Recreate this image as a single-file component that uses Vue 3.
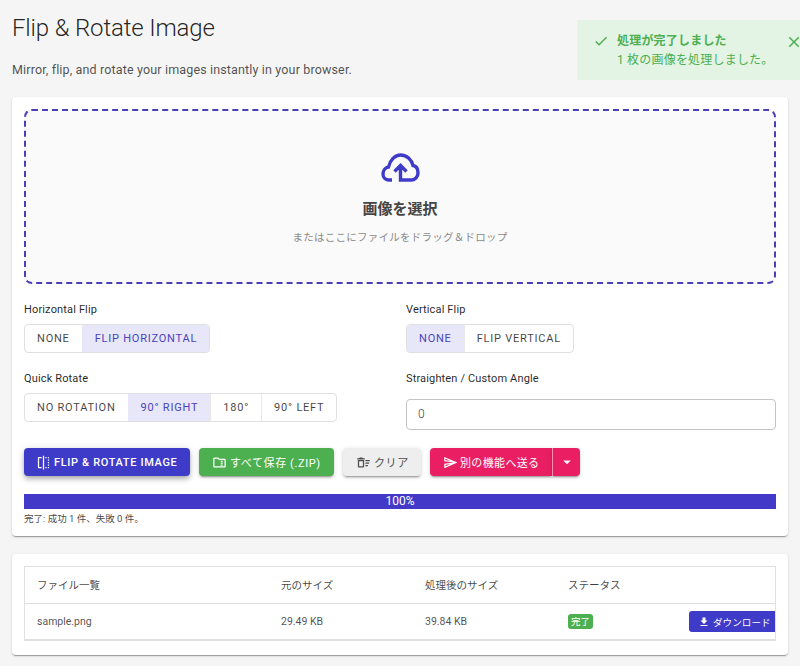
<script setup>
const flipOptions = [
  { label: 'Horizontal Flip', items: ['None', 'Flip Horizontal'], active: 1 },
  { label: 'Vertical Flip', items: ['None', 'Flip Vertical'], active: 0 },
];
const rotateItems = ['No Rotation', '90° Right', '180°', '90° Left'];
const headers = ['ファイル一覧', '元のサイズ', '処理後のサイズ', 'ステータス', ''];
</script>

<template>
  <div class="page">
    <!-- 完了トースト -->
    <div class="toast">
      <svg class="toast-check" viewBox="0 0 24 24"><path d="M9 16.17 4.83 12l-1.42 1.41L9 19 21 7l-1.41-1.41z" /></svg>
      <div class="toast-body">
        <div class="toast-title">処理が完了しました</div>
        <div>1 枚の画像を処理しました。</div>
      </div>
      <svg class="toast-close" viewBox="0 0 24 24"><path d="M19 6.41 17.59 5 12 10.59 6.41 5 5 6.41 10.59 12 5 17.59 6.41 19 12 13.41 17.59 19 19 17.59 13.41 12z" /></svg>
    </div>

    <h1 class="title">Flip &amp; Rotate Image</h1>
    <p class="subtitle">Mirror, flip, and rotate your images instantly in your browser.</p>

    <section class="card main-card">
      <div class="dropzone">
        <svg class="cloud" viewBox="0 0 40 36"><path d="M12 30H9C5.500 30 3 27.500 3 24C3 20.500 5.500 17.500 8.500 17C10 10 15 5 20.500 5C27 5 32 10 33 15.500C36.500 16 38 19.500 38 23C38 27 35 30 31 30H20.500V16M14.500 21.500L20.500 15.500L26.500 21.500" /></svg>
        <div class="drop-title">画像を選択</div>
        <div class="drop-hint">またはここにファイルをドラッグ＆ドロップ</div>
      </div>

      <div class="options">
        <div v-for="opt in flipOptions" :key="opt.label" class="option">
          <div class="option-label">{{ opt.label }}</div>
          <div class="toggle-group">
            <span
              v-for="(item, i) in opt.items"
              :key="item"
              class="toggle"
              :class="{ active: i === opt.active }"
            >{{ item }}</span>
          </div>
        </div>

        <div class="option">
          <div class="option-label">Quick Rotate</div>
          <div class="toggle-group">
            <span
              v-for="(item, i) in rotateItems"
              :key="item"
              class="toggle"
              :class="{ active: i === 1 }"
            >{{ item }}</span>
          </div>
        </div>

        <div class="option">
          <div class="option-label angle-label">Straighten / Custom Angle</div>
          <div class="angle-input">0</div>
        </div>
      </div>

      <div class="actions">
        <button class="btn btn-primary">
          <svg viewBox="0 0 24 24"><path d="M15 21h2v-2h-2v2zm4-12h2V7h-2v2zM3 5v14c0 1.1.9 2 2 2h4v-2H5V5h4V3H5c-1.1 0-2 .9-2 2zm16-2v2h2c0-1.1-.9-2-2-2zm-8 20h2V1h-2v22zm8-6h2v-2h-2v2zM15 5h2V3h-2v2zm4 8h2v-2h-2v2zm0 8c1.1 0 2-.9 2-2h-2v2z" /></svg>
          <span class="upper">Flip &amp; Rotate Image</span>
        </button>
        <button class="btn btn-green">
          <svg viewBox="0 0 24 24"><path d="M20 6h-8l-2-2H4c-1.100 0-1.990.900-1.990 2L2 18c0 1.100.900 2 2 2h16c1.100 0 2-.900 2-2V8c0-1.100-.900-2-2-2zm0 12H4V6h5.170l2 2H20v10zm-6-9h3v2h-3zm0 3h3v2h-3zm0 3h3v2h-3z" /></svg>
          <span>すべて保存 (.ZIP)</span>
        </button>
        <button class="btn btn-grey">
          <svg viewBox="0 0 24 24"><path d="M15 16h4v2h-4zm0-8h7v2h-7zm0 4h6v2h-6zM3 18c0 1.100.900 2 2 2h6c1.100 0 2-.900 2-2V8H3v10zm2-8h6v8H5v-8zm5-6H6L5 5H2v2h12V5h-3z" /></svg>
          <span>クリア</span>
        </button>
        <div class="split">
          <button class="btn btn-pink split-main">
            <svg viewBox="0 0 24 24"><path d="M4.010 6.030l7.510 3.220-7.520-1 .010-2.220m7.500 8.720L4 17.970v-2.220l7.510-1M2.010 3 2 10l15 2-15 2 .010 7L23 12 2.010 3z" /></svg>
            <span>別の機能へ送る</span>
          </button>
          <button class="btn btn-pink split-arrow">
            <svg viewBox="0 0 24 24"><path d="M7 10l5 5 5-5z" /></svg>
          </button>
        </div>
      </div>

      <div class="progress">100%</div>
      <div class="progress-note">完了: 成功 1 件、失敗 0 件。</div>
    </section>

    <section class="card table-card">
      <div class="table-wrap">
        <table class="files">
          <thead>
            <tr>
              <th v-for="h in headers" :key="h">{{ h }}</th>
            </tr>
          </thead>
          <tbody>
            <tr>
              <td>sample.png</td>
              <td>29.49 KB</td>
              <td>39.84 KB</td>
              <td><span class="chip">完了</span></td>
              <td class="cell-action">
                <button class="btn-download">
                  <svg viewBox="0 0 24 24"><path d="M19 9h-4V3H9v6H5l7 7 7-7zM5 18v2h14v-2H5z" /></svg>
                  <span>ダウンロード</span>
                </button>
              </td>
            </tr>
          </tbody>
        </table>
      </div>
    </section>
  </div>
</template>

<style>
html,
body {
  margin: 0;
  background: #f5f5f5;
}
</style>

<style scoped>
.page {
  position: relative;
  height: 666px;
  box-sizing: border-box;
  padding: 12px;
  overflow: hidden;
  background: #f5f5f5;
  color: rgba(0, 0, 0, 0.87);
  font-family: Roboto, "Noto Sans CJK JP", sans-serif;
}

.title {
  margin: 0;
  font-size: 24px;
  font-weight: 300;
  line-height: 32px;
  letter-spacing: -0.15px;
}

.subtitle {
  margin: 17px 0 0;
  font-size: 12.5px;
  line-height: 18px;
  letter-spacing: 0.15px;
  color: rgba(0, 0, 0, 0.7);
}

.toast {
  position: absolute;
  top: 20px;
  left: 577px;
  width: 223px;
  height: 60px;
  box-sizing: border-box;
  padding: 12px 0 0 16px;
  display: flex;
  background: #e3f4e4;
  border-radius: 2px;
  color: #4caf50;
  font-size: 12px;
  line-height: 19px;
  letter-spacing: 0.2px;
}

.toast svg {
  fill: #4caf50;
  flex: none;
}

.toast-check {
  width: 16px;
  height: 16px;
  margin-top: 1px;
}

.toast-body {
  margin-left: 8px;
  white-space: nowrap;
}

.toast-title {
  font-weight: 700;
}

.toast-close {
  position: absolute;
  left: 208px;
  top: 13px;
  width: 18px;
  height: 18px;
}

.card {
  background: #fff;
  border-radius: 4px;
  box-shadow: 0 2px 1px -1px rgba(0, 0, 0, 0.2), 0 1px 1px rgba(0, 0, 0, 0.14), 0 1px 3px rgba(0, 0, 0, 0.12);
  padding: 12px;
}

.main-card {
  margin-top: 18px;
  height: 439px;
  box-sizing: border-box;
}

.dropzone {
  height: 175px;
  box-sizing: border-box;
  border: 2px dashed #4a3fb5;
  border-radius: 8px;
  background: #fafafa;
  display: flex;
  flex-direction: column;
  align-items: center;
  padding-top: 39px;
}

.cloud {
  width: 40px;
  height: 36px;
  fill: none;
  stroke: #3f3bc9;
  stroke-width: 3.4;
}

.drop-title {
  margin-top: 11px;
  font-size: 15px;
  font-weight: 700;
  line-height: 24px;
  color: #444;
}

.drop-hint {
  margin-top: 9px;
  font-size: 10.5px;
  line-height: 16px;
  letter-spacing: 0.25px;
  color: #8a8a8a;
}

.options {
  margin-top: 19px;
  display: grid;
  grid-template-columns: 370px 370px;
  column-gap: 12px;
  row-gap: 19px;
}

.option-label {
  font-size: 11px;
  line-height: 14px;
  letter-spacing: 0.15px;
  margin-bottom: 7px;
}

.angle-label {
  margin-bottom: 13px;
}

.toggle-group {
  display: inline-flex;
  height: 29px;
  box-sizing: border-box;
  border: 1px solid #e0e0e0;
  border-radius: 4px;
  overflow: hidden;
}

.toggle {
  display: flex;
  align-items: center;
  padding: 0 12px;
  font-size: 11px;
  font-weight: 400;
  letter-spacing: 0.78px;
  text-transform: uppercase;
  color: rgba(0, 0, 0, 0.75);
  border-left: 1px solid #e8e8e8;
}

.toggle:first-child {
  border-left: 0;
}

.toggle.active {
  background: #e7e7f9;
  color: #4a43bd;
  border-left-color: transparent;
}

.angle-input {
  height: 31px;
  box-sizing: border-box;
  border: 1px solid #c4c4c4;
  border-radius: 4px;
  padding: 0 11px;
  font-size: 12px;
  font-weight: 300;
  line-height: 29px;
  color: rgba(0, 0, 0, 0.8);
}

.actions {
  margin-top: 18px;
  display: flex;
  gap: 9px;
}

.btn {
  height: 28px;
  border: 0;
  border-radius: 4px;
  padding: 0 12px;
  display: flex;
  align-items: center;
  gap: 3px;
  font-family: inherit;
  font-size: 11px;
  font-weight: 500;
  letter-spacing: 0.6px;
  color: #fff;
  box-shadow: 0 3px 1px -2px rgba(0, 0, 0, 0.2), 0 2px 2px rgba(0, 0, 0, 0.14), 0 1px 5px rgba(0, 0, 0, 0.12);
}

.btn svg {
  width: 15px;
  height: 15px;
  fill: currentColor;
  flex: none;
}

.upper {
  text-transform: uppercase;
}

.btn-primary {
  width: 166px;
  padding: 0 0 0 12px;
  gap: 3px;
  letter-spacing: 0.65px;
  background: #3f3bc9;
  box-shadow: 0 2px 4px -1px rgba(0, 0, 0, 0.2), 0 4px 5px rgba(0, 0, 0, 0.14), 0 1px 10px rgba(0, 0, 0, 0.12);
}

.btn-green {
  width: 135px;
  padding: 0 0 0 13px;
  background: #4caf50;
  font-weight: 400;
}

.btn-grey {
  width: 78px;
  padding: 0 0 0 13px;
  background: #eeeeee;
  color: #4d4d4d;
  font-weight: 400;
}

.split {
  display: flex;
}

.btn-pink {
  background: #e91e63;
  font-weight: 400;
}

.split-main {
  width: 122px;
  padding: 0 0 0 13px;
  gap: 2px;
  letter-spacing: 0.35px;
  border-radius: 4px 0 0 4px;
}

.split-arrow {
  width: 28px;
  padding: 0;
  justify-content: center;
  border-left: 1px solid #f58fb2;
  border-radius: 0 4px 4px 0;
}

.split-arrow svg {
  width: 18px;
  height: 18px;
}

.progress {
  margin-top: 18px;
  height: 15px;
  background: #4339c9;
  color: #fff;
  font-size: 12px;
  line-height: 15px;
  text-align: center;
}

.progress-note {
  margin-top: 3px;
  font-size: 9.5px;
  line-height: 14px;
  color: rgba(0, 0, 0, 0.75);
}

.table-card {
  margin-top: 18px;
  height: 101px;
  box-sizing: border-box;
}

.table-wrap {
  height: 75px;
  box-sizing: border-box;
  border: 1px solid #e0e0e0;
  border-bottom-width: 2px;
  overflow: hidden;
}

.files {
  width: 764px;
  table-layout: fixed;
  border-collapse: collapse;
  font-size: 10.5px;
}

.files th {
  box-sizing: border-box;
  height: 36px;
  padding: 0 0 0 12px;
  text-align: left;
  font-weight: 400;
  color: rgba(0, 0, 0, 0.75);
  border-bottom: 1px solid #e0e0e0;
}

.files th:nth-child(1) {
  width: 244px;
}

.files th:nth-child(2) {
  width: 144px;
}

.files th:nth-child(3) {
  width: 143px;
}

.files th:nth-child(4) {
  width: 120px;
}

.files td {
  height: 36px;
  padding: 0 0 0 12px;
  color: rgba(0, 0, 0, 0.7);
}

.chip {
  display: inline-block;
  background: #4caf50;
  color: #fff;
  font-size: 9.5px;
  line-height: 15px;
  padding: 0 3px;
  border-radius: 3px;
}

.files td.cell-action {
  padding: 0 0 0 13px;
}

.btn-download {
  width: 92px;
  height: 21px;
  border: 0;
  border-radius: 3px;
  padding: 0 0 0 9px;
  display: flex;
  align-items: center;
  gap: 3px;
  background: #3f3bc9;
  color: #fff;
  font-family: inherit;
  font-size: 9.5px;
  letter-spacing: 0.1px;
  white-space: nowrap;
}

.btn-download svg {
  width: 12px;
  height: 12px;
  fill: currentColor;
  flex: none;
}
</style>
